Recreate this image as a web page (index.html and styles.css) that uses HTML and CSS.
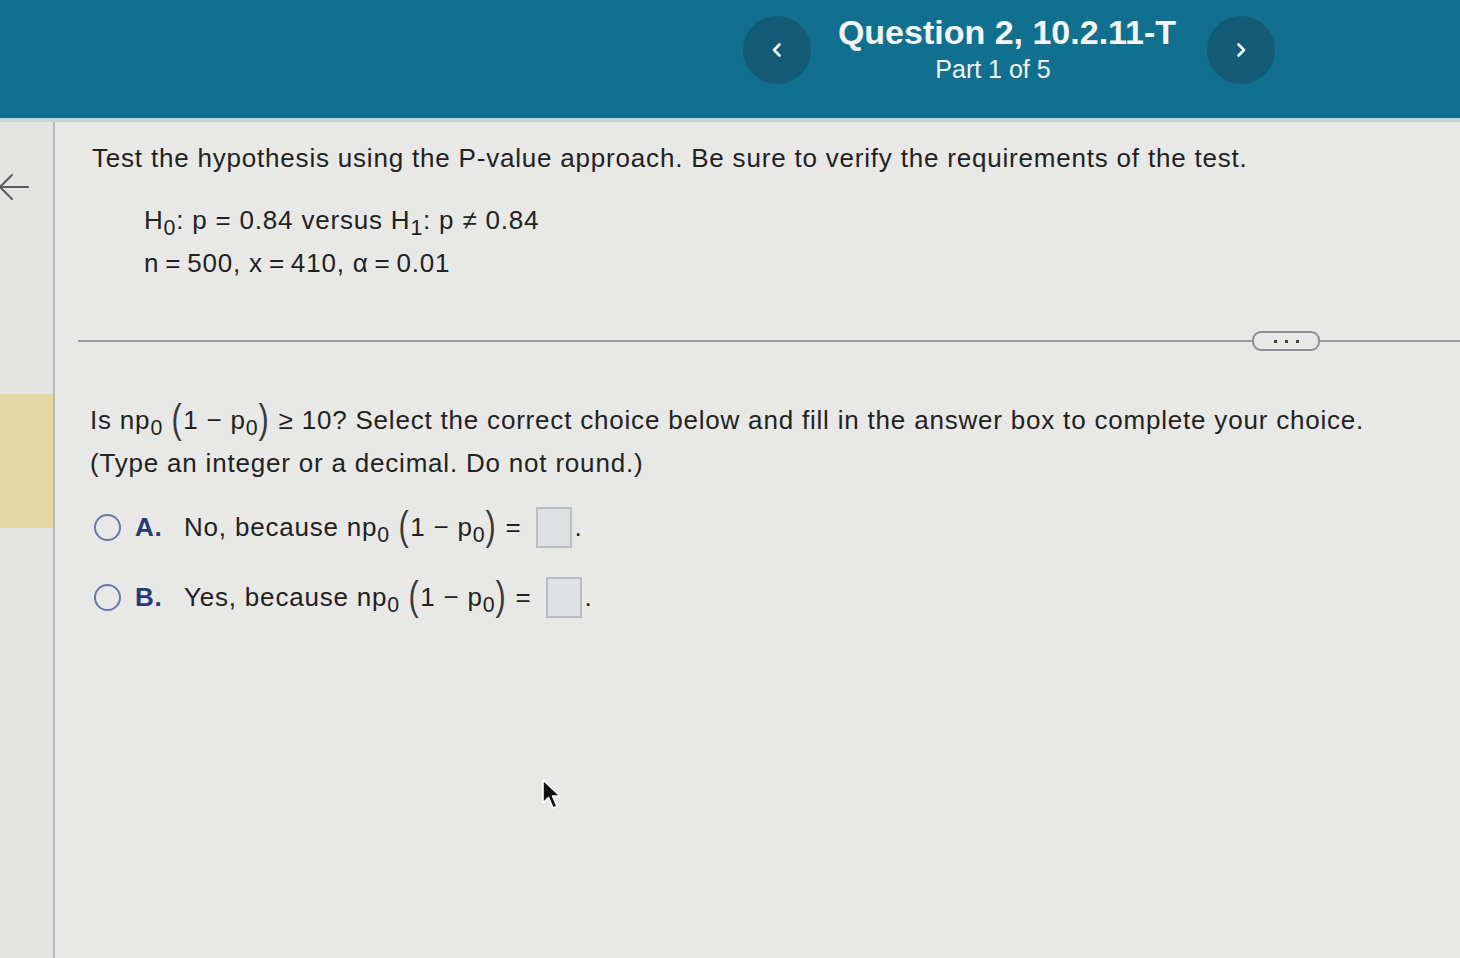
FILE: index.html
```html
<!DOCTYPE html>
<html>
<head>
<meta charset="utf-8">
<link rel="stylesheet" href="styles.css">
</head>
<body>
<header class="topbar">
  <div class="nav">
    <button class="navbtn prev"><svg viewBox="0 0 20 20" width="20" height="20"><path d="M12.5 4.5 L7 10 L12.5 15.5" fill="none" stroke="#fff" stroke-width="2.6" stroke-linecap="round" stroke-linejoin="round"/></svg></button>
    <div class="title">
      <div class="qname">Question 2, 10.2.11-T</div>
      <div class="part">Part 1 of 5</div>
    </div>
    <button class="navbtn next"><svg viewBox="0 0 20 20" width="20" height="20"><path d="M7.5 4.5 L13 10 L7.5 15.5" fill="none" stroke="#fff" stroke-width="2.6" stroke-linecap="round" stroke-linejoin="round"/></svg></button>
  </div>
</header>
<div class="page">
  <aside class="side">
    <svg class="back" viewBox="0 0 36 30" width="36" height="30"><path d="M31 15 H3 M15 3 L3 15 L15 27" fill="none" stroke="#5a5a5a" stroke-width="2" stroke-linecap="round" stroke-linejoin="round"/></svg>
    <div class="mark"></div>
  </aside>
  <main class="main">
    <section class="problem">
      <p class="lead">Test the hypothesis using the P-value approach. Be sure to verify the requirements of the test.</p>
      <div class="given">
        <div class="line">H<sub>0</sub>: p = 0.84 versus H<sub>1</sub>: p ≠ 0.84</div>
        <div class="line">n&#8201;=&#8201;500, x&#8201;=&#8201;410, α&#8201;=&#8201;0.01</div>
      </div>
    </section>
    <div class="divider"><span class="rule"></span><span class="pill"><i></i><i></i><i></i></span><span class="rule short"></span></div>
    <section class="question">
      <p class="qtext">Is np<sub>0</sub> <span class="par">(</span>1 − p<sub>0</sub><span class="par">)</span> ≥ 10? Select the correct choice below and fill in the answer box to complete your choice.<br>(Type an integer or a decimal. Do not round.)</p>
      <div class="choice a">
        <span class="radio"></span><span class="letter">A.</span>
        <span class="ctext">No, because np<sub>0</sub> <span class="par">(</span>1 − p<sub>0</sub><span class="par">)</span> = <span class="box"></span>.</span>
      </div>
      <div class="choice b">
        <span class="radio"></span><span class="letter">B.</span>
        <span class="ctext">Yes, because np<sub>0</sub> <span class="par">(</span>1 − p<sub>0</sub><span class="par">)</span> = <span class="box"></span>.</span>
      </div>
    </section>
    <svg class="cursor" viewBox="0 0 22 34" width="22" height="34"><path d="M2 2 L2 25 L7.5 19.5 L12 30 L16 28.2 L11.5 18 L19 18 Z" fill="#111" stroke="#fff" stroke-width="1.6" stroke-linejoin="round"/></svg>
  </main>
</div>
</body>
</html>
```
FILE: styles.css
```css
html, body {
  margin: 0;
  padding: 0;
}
body {
  width: 1460px;
  height: 958px;
  overflow: hidden;
  background: #e5e5e3;
  font-family: "Liberation Sans", Arial, sans-serif;
  color: #222;
}
.topbar {
  height: 118px;
  background: #11708f;
  border-bottom: 4px solid #c9d3d6;
}
.nav {
  display: flex;
  align-items: flex-start;
  padding-left: 743px;
  padding-top: 16px;
}
.navbtn {
  width: 68px;
  height: 68px;
  border-radius: 50%;
  background: #135b76;
  border: none;
  padding: 0;
  display: flex;
  align-items: center;
  justify-content: center;
  flex: none;
}
.title {
  width: 396px;
  text-align: center;
  color: #f4f6f6;
  margin-top: -5px;
}
.qname {
  font-size: 34px;
  font-weight: bold;
  line-height: 42px;
  margin-left: -4px;
}
.part {
  font-size: 25px;
  line-height: 30px;
  margin-left: -32px;
  margin-top: 1px;
}
.page {
  display: flex;
  height: 836px;
}
.side {
  width: 53px;
  border-right: 2px solid #b8b8b8;
  background: #e3e3e1;
  flex: none;
}
.back {
  display: block;
  margin-top: 50px;
  margin-left: -3px;
}
.mark {
  margin-top: 192px;
  height: 134px;
  background: #e2d8a4;
}
.main {
  flex: 1;
  position: relative;
  background: #e8e8e6;
}
.problem {
  padding-left: 37px;
  padding-top: 18px;
}
.lead, .line, .qtext, .choice {
  font-size: 26px;
  letter-spacing: 0.8px;
}
.lead {
  margin: 0;
  line-height: 36px;
}
.given {
  margin-top: 23px;
  padding-left: 52px;
}
.line {
  line-height: 43px;
}
sub {
  font-size: 0.82em;
  vertical-align: -0.3em;
  line-height: 0;
}
.divider {
  display: flex;
  align-items: center;
  margin-top: 46px;
  margin-left: 23px;
  height: 20px;
}
.rule {
  flex: 1;
  height: 2px;
  background: #9a9aa0;
}
.rule.short {
  flex: none;
  width: 140px;
}
.pill {
  width: 64px;
  height: 16px;
  border: 2px solid #8d8d95;
  border-radius: 9px;
  background: #e8e8e6;
  display: flex;
  align-items: center;
  justify-content: center;
  gap: 8px;
}
.pill i {
  display: block;
  width: 3px;
  height: 3px;
  background: #444;
}
.question {
  padding-left: 35px;
  padding-top: 48px;
}
.qtext {
  margin: 0;
  line-height: 43px;
}
.par {
  display: inline-block;
  font-size: 34px;
  line-height: 20px;
  vertical-align: -2px;
  color: #3a3a3a;
  transform: scaleY(1.18) scaleX(0.9);
}
.choice {
  display: flex;
  align-items: center;
  height: 70px;
}
.choice.a {
  margin-top: 7px;
}
.radio {
  width: 23px;
  height: 23px;
  border: 2.5px solid #6a78a8;
  border-radius: 50%;
  margin-left: 4px;
  flex: none;
}
.letter {
  font-weight: bold;
  color: #273a78;
  margin-left: 14px;
  width: 49px;
  flex: none;
}
.ctext {
  white-space: nowrap;
}
.box {
  display: inline-block;
  width: 32px;
  height: 37px;
  border: 2px solid #b9bdc4;
  background: #e0e1e2;
  margin-left: 6px;
  margin-right: 3px;
  vertical-align: -12px;
}
.cursor {
  position: absolute;
  left: 486px;
  top: 656px;
}
```
